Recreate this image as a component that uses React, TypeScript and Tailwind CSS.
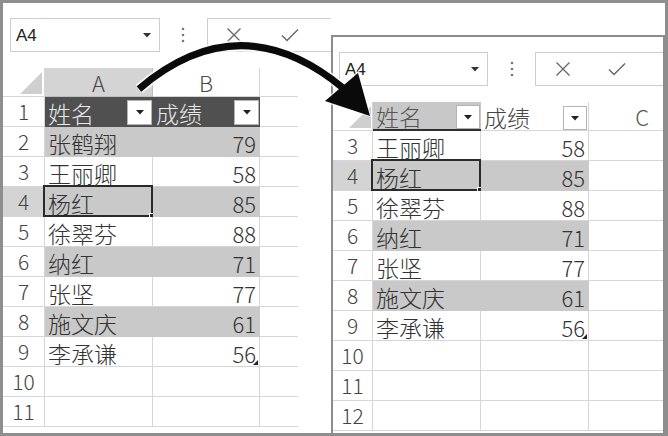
import React from "react";

function Caret() {
  return (
    <svg width="8" height="5" viewBox="0 0 8 5">
      <polygon points="0,0 8,0 4,4.5" fill="#333" />
    </svg>
  );
}

function VDots() {
  return (
    <svg width="4" height="16" viewBox="0 0 4 16">
      <circle cx="2" cy="2" r="1.3" fill="#777" />
      <circle cx="2" cy="8" r="1.3" fill="#777" />
      <circle cx="2" cy="14" r="1.3" fill="#777" />
    </svg>
  );
}

function XIcon() {
  return (
    <svg width="16" height="16" viewBox="0 0 16 16">
      <path d="M1.5 1.5 L14.5 14.5 M14.5 1.5 L1.5 14.5" stroke="#666" strokeWidth="1.3" fill="none" />
    </svg>
  );
}

function CheckIcon() {
  return (
    <svg width="18" height="14" viewBox="0 0 18 14">
      <path d="M1 7.5 L6 12.5 L17 1.5" stroke="#666" strokeWidth="1.4" fill="none" />
    </svg>
  );
}

function Corner() {
  return (
    <svg width="22" height="22" viewBox="0 0 22 22">
      <polygon points="22,0 22,22 0,22" fill="#cfcfcf" />
    </svg>
  );
}

function FilterBtn({ size }: { size: "l" | "r" }) {
  return (
    <div
      className={`${size === "l" ? "w-[25px] h-[25px]" : "w-[24px] h-[24px]"} shrink-0 bg-white border border-[#b5b5b5] flex items-center justify-center`}
    >
      <svg width="8" height="5" viewBox="0 0 8 5">
        <polygon points="0,0 8,0 4,4.5" fill="#222" />
      </svg>
    </div>
  );
}

function SelBox() {
  return (
    <div className="absolute left-[-2px] top-[-2px] right-[-1px] bottom-[-1px] border-2 border-[#2a2a2a]">
      <div className="absolute right-[-4px] bottom-[-4px] w-[6px] h-[6px] bg-[#2a2a2a] border border-white" />
    </div>
  );
}

function ResizeMark() {
  return (
    <svg width="5" height="5" viewBox="0 0 5 5" className="absolute right-[1px] bottom-[1px]">
      <polygon points="5,0 5,5 0,5" fill="#222" />
    </svg>
  );
}

type Row = { n: number; name?: string; score?: string; band?: boolean; sel?: boolean; last?: boolean };

const leftRows: Row[] = [
  { n: 2, name: "张鹤翔", score: "79", band: true },
  { n: 3, name: "王丽卿", score: "58" },
  { n: 4, name: "杨红", score: "85", band: true, sel: true },
  { n: 5, name: "徐翠芬", score: "88" },
  { n: 6, name: "纳红", score: "71", band: true },
  { n: 7, name: "张坚", score: "77" },
  { n: 8, name: "施文庆", score: "61", band: true },
  { n: 9, name: "李承谦", score: "56", last: true },
  { n: 10 },
  { n: 11 },
];

const rightRows: Row[] = [
  { n: 3, name: "王丽卿", score: "58" },
  { n: 4, name: "杨红", score: "85", band: true, sel: true },
  { n: 5, name: "徐翠芬", score: "88" },
  { n: 6, name: "纳红", score: "71", band: true },
  { n: 7, name: "张坚", score: "77" },
  { n: 8, name: "施文庆", score: "61", band: true },
  { n: 9, name: "李承谦", score: "56", last: true },
  { n: 10 },
  { n: 11 },
  { n: 12 },
];

function DataRow({ r, side }: { r: Row; side: "l" | "r" }) {
  const cellBorder = r.band ? "border-[#c9c9c9] bg-[#c9c9c9]" : "border-[#d6d6d6] bg-white";
  return (
    <div className="flex h-[30px]">
      <div
        className={`${side === "l" ? "w-[42px]" : "w-[40px]"} shrink-0 border-r border-b border-[#d6d6d6] flex items-center justify-center text-[21px] text-[#444] leading-none ${r.sel ? "bg-[#d4d4d4]" : "bg-white"}`}
      >
        {r.n}
      </div>
      <div className={`w-[108px] shrink-0 border-r border-b ${cellBorder} relative flex items-center pl-[3px] pt-[3px] text-[23px] text-[#333] leading-none`}>
        {r.name}
        {r.sel && <SelBox />}
      </div>
      <div
        className={`${side === "l" ? "w-[107px]" : "w-[108px]"} shrink-0 border-r border-b ${cellBorder} relative flex items-center justify-end pr-[3px] pt-[3px] text-[22px] text-[#333] leading-none`}
      >
        {r.score}
        {r.last && <ResizeMark />}
      </div>
      <div className={`${side === "l" ? "w-[38px]" : "w-[74px]"} shrink-0 border-b border-[#d6d6d6] bg-white`} />
    </div>
  );
}

function LeftPanel() {
  return (
    <div className="w-[328px] shrink-0 flex flex-col">
      <div className="flex items-center h-[34px] mt-[15px] pl-[7px]">
        <div className="w-[150px] shrink-0 h-[34px] border border-[#cdcdcd] flex items-center justify-between pl-[5px] pr-[8px]">
          <span className="text-[17px] text-[#222] leading-none font-normal font-['Liberation_Sans',sans-serif]">A4</span>
          <Caret />
        </div>
        <div className="ml-[21px] flex items-center">
          <VDots />
        </div>
        <div className="ml-[22px] flex-1 h-[34px] border-y border-l border-[#cdcdcd] flex items-center">
          <div className="ml-[18px] flex">
            <XIcon />
          </div>
          <div className="ml-[39px] flex">
            <CheckIcon />
          </div>
        </div>
      </div>
      <div className="mt-[16px]">
        <div className="flex h-[29px]">
          <div className="w-[42px] shrink-0 border-r border-b border-[#d6d6d6] flex items-end justify-end pr-[2px] pb-[2px]">
            <Corner />
          </div>
          <div className="w-[108px] shrink-0 border-r border-b border-[#bdbdbd] bg-[#d4d4d4] flex items-center justify-center text-[22px] text-[#4a4a4a] leading-none">
            A
          </div>
          <div className="w-[107px] shrink-0 border-r border-b border-[#d6d6d6] flex items-center justify-center text-[22px] text-[#4a4a4a] leading-none">
            B
          </div>
          <div className="w-[38px] shrink-0 border-b border-[#d6d6d6]" />
        </div>
        <div className="flex h-[30px]">
          <div className="w-[42px] shrink-0 border-r border-b border-[#d6d6d6] flex items-center justify-center text-[21px] text-[#444] leading-none">
            1
          </div>
          <div className="w-[108px] shrink-0 bg-[#505050] flex items-center justify-between pl-[3px] pr-[1px]">
            <span className="text-[23px] text-[#e8e8e8] leading-none pt-[3px]">姓名</span>
            <FilterBtn size="l" />
          </div>
          <div className="w-[107px] shrink-0 bg-[#505050] flex items-center justify-between pl-[3px] pr-[1px]">
            <span className="text-[23px] text-[#e8e8e8] leading-none pt-[3px]">成绩</span>
            <FilterBtn size="l" />
          </div>
          <div className="w-[38px] shrink-0 border-b border-[#d6d6d6]" />
        </div>
        {leftRows.map((r) => (
          <DataRow key={r.n} r={r} side="l" />
        ))}
      </div>
    </div>
  );
}

function RightPanel() {
  return (
    <div className="absolute left-[328px] top-[32px] w-[334px] h-[398px] border-l-2 border-t-2 border-r-2 border-[#8c8c8c] bg-white overflow-hidden flex flex-col">
      <div className="flex items-center h-[34px] mt-[15px] pl-[6px]">
        <div className="w-[149px] shrink-0 h-[34px] border border-[#cdcdcd] flex items-center justify-between pl-[5px] pr-[8px]">
          <span className="text-[17px] text-[#222] leading-none font-normal font-['Liberation_Sans',sans-serif]">A4</span>
          <Caret />
        </div>
        <div className="ml-[22px] flex items-center">
          <VDots />
        </div>
        <div className="ml-[21px] flex-1 h-[34px] border-y border-l border-[#cdcdcd] flex items-center">
          <div className="ml-[19px] flex">
            <XIcon />
          </div>
          <div className="ml-[37px] flex">
            <CheckIcon />
          </div>
        </div>
      </div>
      <div className="mt-[16px]">
        <div className="flex h-[29px]">
          <div className="w-[40px] shrink-0 border-r border-b border-[#d6d6d6] flex items-end justify-end pr-[1px] pb-[2px]">
            <Corner />
          </div>
          <div className="w-[108px] shrink-0 border-b-2 border-[#2f2f2f] bg-[#c8c8c8] flex items-end justify-between pl-[3px] pr-[1px]">
            <span className="text-[23px] text-[#555] leading-none pb-[1px]">姓名</span>
            <FilterBtn size="r" />
          </div>
          <div className="w-[108px] shrink-0 border-r border-b border-[#d6d6d6] flex items-end justify-between pl-[3px] pr-[1px]">
            <span className="text-[23px] text-[#444] leading-none pb-[1px]">成绩</span>
            <FilterBtn size="r" />
          </div>
          <div className="w-[74px] shrink-0 border-b border-[#d6d6d6] flex items-center justify-end pr-[14px] text-[22px] text-[#555] leading-none">
            C
          </div>
        </div>
        {rightRows.map((r) => (
          <DataRow key={r.n} r={r} side="r" />
        ))}
      </div>
    </div>
  );
}

function Arrow() {
  return (
    <svg
      width="668"
      height="436"
      viewBox="0 0 668 436"
      className="absolute left-[-3px] top-[-3px] pointer-events-none"
    >
      <path d="M139 89 Q240 3 343 88" stroke="#ffffff" strokeOpacity="0.7" strokeWidth="11" fill="none" />
      <polygon points="371,117 322,102 359,70" fill="#ffffff" fillOpacity="0.7" />
      <path d="M139 89 Q240 3 343 88" stroke="#0a0a0a" strokeWidth="7" fill="none" />
      <polygon points="370,116 325,101 358,73" fill="#0a0a0a" />
    </svg>
  );
}

export default function App() {
  return (
    <div className="w-[668px] h-[436px] border-[3px] border-[#8e8e8e] bg-white relative overflow-hidden flex font-light font-['Noto_Sans_CJK_SC','Noto_Sans',sans-serif]">
      <LeftPanel />
      <RightPanel />
      <Arrow />
    </div>
  );
}
